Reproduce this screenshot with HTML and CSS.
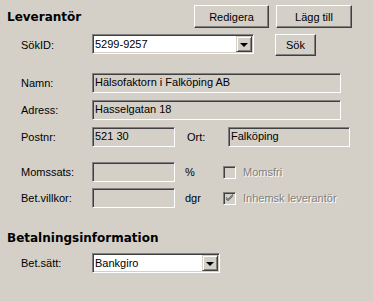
FILE: index.html
```html
<!DOCTYPE html>
<html lang="sv">
<head>
    <meta charset="UTF-8">
    <title>Leverantör</title>
    <link rel="stylesheet" href="styles.css">
</head>
<body>
    <div class="form">
        <div class="header">
            <h2 class="title">Leverantör</h2>
            <button class="btn btn-edit">Redigera</button>
            <button class="btn btn-add">Lägg till</button>
        </div>

        <div class="row row-search">
            <label class="lbl">SökID:</label>
            <div class="field combo combo-search">
                <span class="val">5299-9257</span>
                <span class="drop"><span class="arrow"></span></span>
            </div>
            <button class="btn btn-search">Sök</button>
        </div>

        <div class="row row-name">
            <label class="lbl">Namn:</label>
            <div class="field ro wide">Hälsofaktorn i Falköping AB</div>
        </div>

        <div class="row row-next">
            <label class="lbl">Adress:</label>
            <div class="field ro wide">Hasselgatan 18</div>
        </div>

        <div class="row row-next">
            <label class="lbl">Postnr:</label>
            <div class="field ro short">521 30</div>
            <label class="lbl lbl-ort">Ort:</label>
            <div class="field ro city">Falköping</div>
        </div>

        <div class="row row-vat">
            <label class="lbl">Momssats:</label>
            <div class="field ro short"></div>
            <span class="unit">%</span>
            <span class="check"></span>
            <span class="disabled">Momsfri</span>
        </div>

        <div class="row row-terms">
            <label class="lbl">Bet.villkor:</label>
            <div class="field ro short"></div>
            <span class="unit">dgr</span>
            <span class="check">
                <svg width="9" height="9" viewBox="0 0 9 9"><path d="M1 3 L3 5 L8 0 M1 4 L3 6 L8 1 M1 5 L3 7 L8 2" stroke="#808080" fill="none" stroke-width="1"/></svg>
            </span>
            <span class="disabled">Inhemsk leverantör</span>
        </div>

        <h2 class="title title-pay">Betalningsinformation</h2>

        <div class="row row-pay">
            <label class="lbl">Bet.sätt:</label>
            <div class="field combo combo-pay">
                <span class="val">Bankgiro</span>
                <span class="drop"><span class="arrow"></span></span>
            </div>
        </div>
    </div>
</body>
</html>
```

FILE: styles.css
```css
body {
    margin: 0;
    background: #d4d0c8;
    font-family: "Liberation Sans", Tahoma, sans-serif;
    font-size: 11px;
    color: #000;
}

.form {
    width: 373px;
    padding-top: 5px;
}

.header {
    display: flex;
    align-items: center;
    height: 23px;
    padding-left: 7px;
}

.title {
    margin: 0;
    padding-top: 2px;
    flex: 1;
    font-family: "DejaVu Sans", sans-serif;
    font-size: 12px;
    font-weight: bold;
    line-height: 15px;
}

.btn {
    box-sizing: border-box;
    height: 23px;
    padding: 0;
    background: #d4d0c8;
    border: 1px solid;
    border-color: #fff #404040 #404040 #fff;
    box-shadow: inset -1px -1px #808080;
    font-family: inherit;
    font-size: 11px;
    color: #000;
}

.btn-edit {
    width: 75px;
}

.btn-add {
    width: 76px;
    margin-left: 7px;
    margin-right: 21px;
}

.row {
    display: flex;
    align-items: center;
    height: 20px;
}

.lbl {
    box-sizing: border-box;
    width: 92px;
    padding-left: 21px;
}

.row-search {
    height: 22px;
    margin-top: 6px;
}

.row-search .combo {
    align-self: flex-start;
}

.row-name {
    margin-top: 17px;
}

.row-next {
    margin-top: 7px;
}

.row-vat {
    margin-top: 15px;
}

.row-terms {
    margin-top: 6px;
}

.field {
    box-sizing: border-box;
    height: 20px;
    padding-left: 2px;
    line-height: 16px;
    border: 1px solid;
    border-color: #808080 #fff #fff #808080;
    box-shadow: inset 1px 1px #404040, inset -1px -1px #d4d0c8;
    white-space: nowrap;
    overflow: hidden;
}

.ro {
    background: #d4d0c8;
}

.wide {
    width: 249px;
}

.short {
    width: 83px;
}

.city {
    width: 122px;
}

.lbl-ort {
    width: 41px;
    margin-left: 12px;
    padding-left: 0;
}

.combo {
    display: flex;
    background: #fff;
    padding: 1px 1px 1px 2px;
}

.combo .val {
    flex: 1;
    line-height: 16px;
}

.combo-search {
    width: 162px;
}

.combo-pay {
    width: 128px;
}

.drop {
    box-sizing: border-box;
    display: flex;
    align-items: center;
    justify-content: center;
    width: 16px;
    height: 16px;
    background: #d4d0c8;
    border: 1px solid;
    border-color: #d4d0c8 #404040 #404040 #d4d0c8;
    box-shadow: inset 1px 1px #fff, inset -1px -1px #808080;
}

.arrow {
    width: 0;
    height: 0;
    border-left: 4px solid transparent;
    border-right: 4px solid transparent;
    border-top: 4px solid #000;
    margin-top: 1px;
}

.btn-search {
    width: 41px;
    height: 22px;
    margin-left: 21px;
}

.unit {
    width: 38px;
    margin-left: 10px;
}

.check {
    box-sizing: border-box;
    display: flex;
    align-items: center;
    justify-content: center;
    width: 13px;
    height: 13px;
    background: #d4d0c8;
    border: 1px solid;
    border-color: #808080 #fff #fff #808080;
    box-shadow: inset 1px 1px #404040, inset -1px -1px #d4d0c8;
}

.disabled {
    margin-left: 7px;
    color: #808080;
    text-shadow: 1px 1px #fff;
}

.title-pay {
    flex: none;
    margin-top: 21px;
    padding-left: 7px;
}

.row-pay {
    margin-top: 7px;
}
```
